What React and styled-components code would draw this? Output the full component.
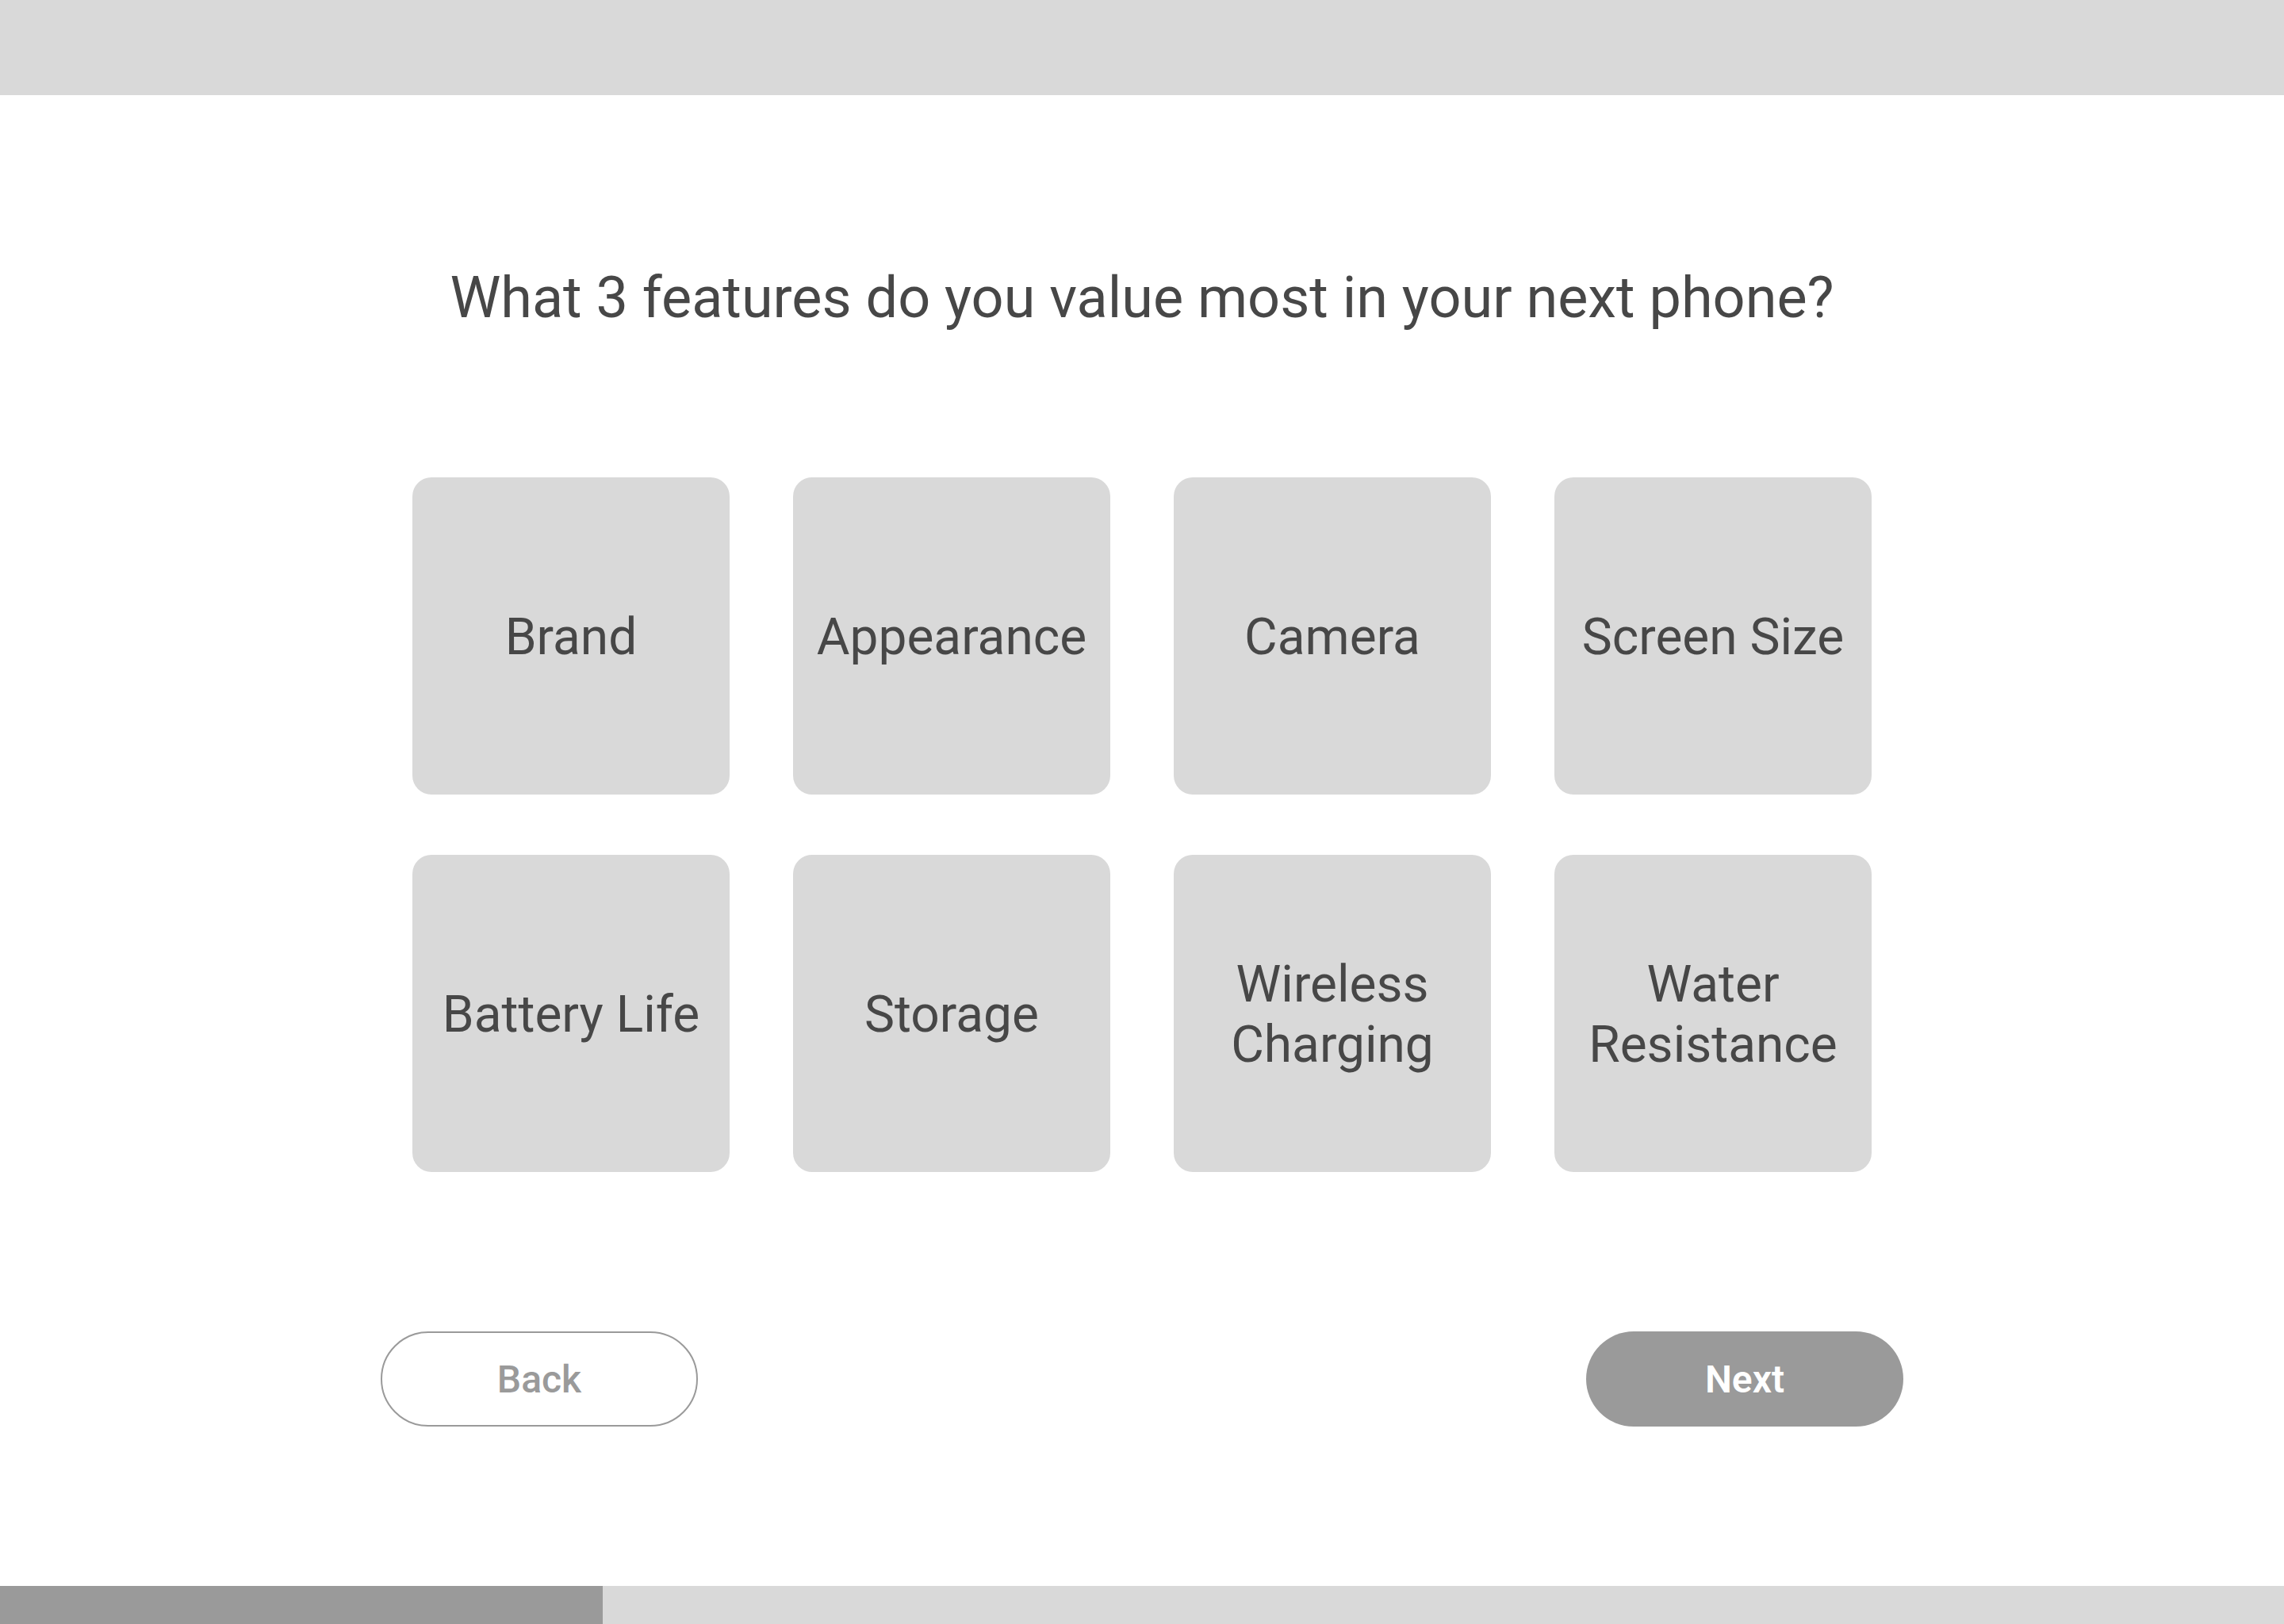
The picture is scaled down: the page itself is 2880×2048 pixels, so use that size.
import React from 'react'
import styled, { createGlobalStyle } from 'styled-components'

const GlobalStyle = createGlobalStyle`
  html, body {
    margin: 0;
    padding: 0;
    background: #ffffff;
  }
  body {
    font-family: Roboto, "Liberation Sans", Arial, sans-serif;
  }
`;

const features = [
  'Brand',
  'Appearance',
  'Camera',
  'Screen Size',
  'Battery Life',
  'Storage',
  'Wireless Charging',
  'Water Resistance',
];

const App = () => {
  return (
    <Page>
      <GlobalStyle />
      <TopBar />
      <Main>
        <Question>What 3 features do you value most in your next phone?</Question>
        <Grid>
          {features.map((f) => (
            <Option key={f}>
              <span>{f}</span>
            </Option>
          ))}
        </Grid>
        <Actions>
          <Button>Back</Button>
          <Button primary>Next</Button>
        </Actions>
      </Main>
      <Progress>
        <Fill style={{ width: `${(1 / 3.79) * 100}%` }} />
      </Progress>
    </Page>
  )
}

const Page = styled.div`
  display: flex;
  flex-direction: column;
  width: 100%;
  min-height: 2048px;
  background: #fff;
`;

const TopBar = styled.div`
  height: 120px;
  background: #d9d9d9;
  flex-shrink: 0;
`;

const Main = styled.main`
  flex: 1;
  display: flex;
  flex-direction: column;
  align-items: center;
`;

const Question = styled.h1`
  margin: 213px 0 0;
  font-size: 72px;
  line-height: 1.2;
  font-weight: 400;
  color: #474747;
  text-align: center;
`;

const Grid = styled.div`
  display: grid;
  grid-template-columns: repeat(4, 400px);
  column-gap: 80px;
  row-gap: 76px;
  margin-top: 183px;
`;

const Option = styled.div`
  width: 400px;
  height: 400px;
  border-radius: 24px;
  background: #d9d9d9;
  display: flex;
  align-items: center;
  justify-content: center;
  text-align: center;
  padding: 4px 20px 0;
  box-sizing: border-box;
  span {
    font-size: 64px;
    line-height: 1.2;
    color: #474747;
  }
`;

const Actions = styled.div`
  width: 1920px;
  display: flex;
  justify-content: space-between;
  margin-top: 201px;
`;

const Button = styled.button`
  width: 400px;
  height: 120px;
  border-radius: 60px;
  box-sizing: border-box;
  font-family: Roboto, "Liberation Sans", Arial, sans-serif;
  font-size: 48px;
  font-weight: ${(p) => (p.primary ? 600 : 500)};
  color: ${(p) => (p.primary ? '#ffffff' : '#9a9a9a')};
  background: ${(p) => (p.primary ? '#9a9a9a' : '#ffffff')};
  border: ${(p) => (p.primary ? 'none' : '2px solid #9a9a9a')};
  cursor: pointer;
`;

const Progress = styled.div`
  height: 48px;
  background: #d9d9d9;
  flex-shrink: 0;
`;

const Fill = styled.div`
  height: 100%;
  background: #9a9a9a;
`;

export default App
